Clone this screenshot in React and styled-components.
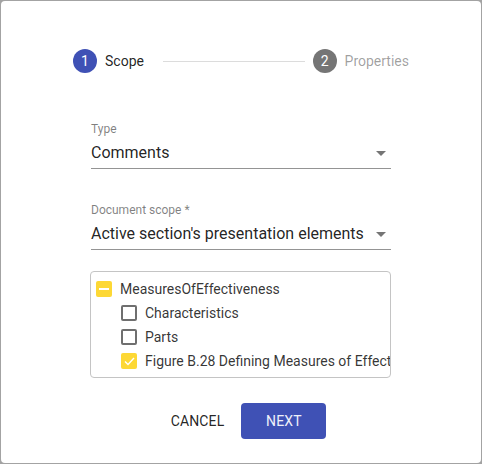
import React from "react";
import styled, { createGlobalStyle } from "styled-components";

const Global = createGlobalStyle`
  html, body { margin: 0; padding: 0; background: #a3a3a3; }
  body { font-family: Roboto, "Liberation Sans", sans-serif; }
  * { box-sizing: border-box; }
`;

const Dialog = styled.div`
  margin: 1px;
  width: 480px;
  height: 462px;
  background: #fff;
  border-radius: 4px;
  display: flex;
  flex-direction: column;
  align-items: center;
  padding-top: 48px;
`;

const Stepper = styled.div`
  width: 336px;
  height: 24px;
  display: flex;
  align-items: center;
`;

const StepIcon = styled.div`
  width: 24px;
  height: 24px;
  border-radius: 50%;
  background: ${(p) => (p.$active ? "#3f51b5" : "#757575")};
  color: #fff;
  font-size: 14px;
  display: flex;
  align-items: center;
  justify-content: center;
  flex: none;
`;

const StepLabel = styled.span`
  margin-left: 8px;
  font-size: 14px;
  color: ${(p) => (p.$active ? "rgba(0,0,0,0.87)" : "rgba(0,0,0,0.38)")};
  white-space: nowrap;
`;

const Connector = styled.div`
  flex: 1;
  height: 1px;
  background: #dcdcdc;
  margin: 0 8px 0 19px;
`;

const Form = styled.div`
  width: 300px;
  display: flex;
  flex-direction: column;
`;

const Field = styled.div`
  margin-top: ${(p) => p.$mt}px;
  display: flex;
  flex-direction: column;
`;

const Label = styled.label`
  font-size: 12px;
  line-height: 16px;
  color: rgba(0, 0, 0, 0.5);
`;

const Select = styled.div`
  margin-top: 4px;
  height: 28px;
  display: flex;
  align-items: flex-start;
  justify-content: space-between;
  border-bottom: 1px solid rgba(0, 0, 0, 0.42);
  font-size: 16px;
  line-height: 24px;
  color: rgba(0, 0, 0, 0.87);
  white-space: nowrap;
`;

const Arrow = styled.svg`
  width: 24px;
  height: 24px;
  fill: rgba(0, 0, 0, 0.54);
  margin-right: -2px;
  flex: none;
`;

const Tree = styled.div`
  margin-top: 21px;
  margin-left: -1px;
  width: 301px;
  height: 107px;
  border: 1px solid #c4c4c4;
  border-radius: 4px;
  padding: 5px 0 0 5px;
  overflow: hidden;
`;

const Row = styled.div`
  height: 24px;
  display: flex;
  align-items: center;
  gap: 8px;
  padding-left: ${(p) => p.$indent}px;
  font-size: 14px;
  color: rgba(0, 0, 0, 0.8);
  white-space: nowrap;
`;

const Box = styled.span`
  width: 16px;
  height: 16px;
  flex: none;
  border-radius: 2px;
  display: flex;
  align-items: center;
  justify-content: center;
  background: ${(p) => (p.$state ? "#fdd835" : "#fff")};
  border: ${(p) => (p.$state ? "none" : "2px solid #6f6f6f")};
`;

const Actions = styled.div`
  margin-top: 25px;
  display: flex;
  align-items: center;
  gap: 6px;
  margin-left: 4px;
`;

const Button = styled.button`
  height: 36px;
  min-width: ${(p) => (p.$primary ? "85px" : "64px")};
  padding: 0 11px;
  border: none;
  border-radius: 4px;
  background: ${(p) => (p.$primary ? "#3f51b5" : "transparent")};
  color: ${(p) => (p.$primary ? "#eef0fa" : "rgba(0,0,0,0.87)")};
  font-family: Roboto, "Liberation Sans", sans-serif;
  font-size: 14px;
  font-weight: 400;
  letter-spacing: 0.01em;
  text-transform: uppercase;
`;

const Check = ({ state }) => (
  <Box $state={state}>
    {state === "checked" && (
      <svg width="11" height="9" viewBox="0 0 11 9">
        <path d="M1 4.5 L4 7.5 L10 1" fill="none" stroke="#fff" strokeWidth="1.4" />
      </svg>
    )}
    {state === "indeterminate" && (
      <svg width="10" height="2" viewBox="0 0 10 2">
        <rect width="10" height="2" fill="#fff" />
      </svg>
    )}
  </Box>
);

const DropArrow = () => (
  <Arrow viewBox="0 0 24 24">
    <path d="M7 10l5 5 5-5z" />
  </Arrow>
);

export default function App() {
  return (
    <>
      <Global />
      <Dialog>
        <Stepper>
          <StepIcon $active>1</StepIcon>
          <StepLabel $active>Scope</StepLabel>
          <Connector />
          <StepIcon>2</StepIcon>
          <StepLabel>Properties</StepLabel>
        </Stepper>
        <Form>
          <Field $mt={48}>
            <Label>Type</Label>
            <Select>
              <span>Comments</span>
              <DropArrow />
            </Select>
          </Field>
          <Field $mt={33}>
            <Label>Document scope *</Label>
            <Select>
              <span>Active section's presentation elements</span>
              <DropArrow />
            </Select>
          </Field>
          <Tree>
            <Row $indent={0}>
              <Check state="indeterminate" />
              MeasuresOfEffectiveness
            </Row>
            <Row $indent={25}>
              <Check />
              Characteristics
            </Row>
            <Row $indent={25}>
              <Check />
              Parts
            </Row>
            <Row $indent={25}>
              <Check state="checked" />
              Figure B.28 Defining Measures of Effectiveness
            </Row>
          </Tree>
        </Form>
        <Actions>
          <Button>Cancel</Button>
          <Button $primary>Next</Button>
        </Actions>
      </Dialog>
    </>
  );
}
